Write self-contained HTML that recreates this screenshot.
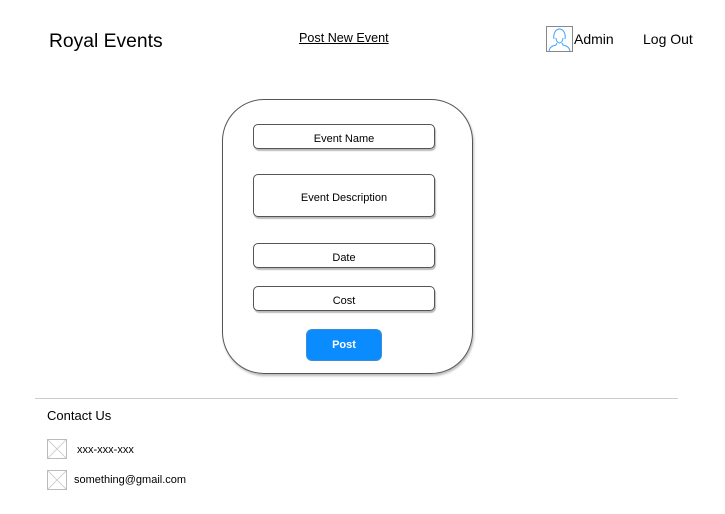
<!DOCTYPE html>
<html><head><meta charset="utf-8"><style>
*{margin:0;padding:0;box-sizing:border-box}
body{width:725px;height:514px;background:#fff;font-family:"Liberation Sans",Arial,sans-serif;color:#000;position:relative;overflow:hidden}
.a{position:absolute;white-space:nowrap}
.card{position:absolute;left:222px;top:99px;width:251px;height:275px;border:1px solid #555;border-radius:42px;box-shadow:1px 2px 2px #bbb}
.f{position:absolute;left:253px;width:182px;border:1px solid #555;border-radius:5px;box-shadow:1px 2px 1px #bbb;font-size:11px;display:flex;align-items:center;justify-content:center;background:#fff;padding-top:4px}
.btn{position:absolute;left:306px;top:329px;width:76px;height:32px;background:#0a8cff;border:1px solid #3a8fd8;border-radius:6px;color:#fff;font-weight:bold;font-size:11px;display:flex;align-items:center;justify-content:center}
.ph{position:absolute;left:47px;width:20px;height:20px;border:1px solid #bbb}
</style></head><body>
<div class="a" style="left:49px;top:31px;font-size:19.3px">Royal Events</div>
<div class="a" style="left:299px;top:31px;font-size:12.6px;text-decoration:underline">Post New Event</div>
<svg class="a" style="left:546px;top:26px" width="27" height="26" viewBox="0 0 27 26">
<rect x="0.5" y="0.5" width="26" height="25" fill="#fff" stroke="#888"/>
<path d="M8 13c-1-6 2-10 5.5-10S20 7 19 13M10 12c0 3 2 5 3.5 5s3.5-2 3.5-5M11 17l-1 2c-4 1-6 2-7 6M16 17l1 2c4 1 6 2 7 6" fill="none" stroke="#3aa0ff" stroke-width="1"/>
</svg>
<div class="a" style="left:574px;top:31px;font-size:14px">Admin</div>
<div class="a" style="left:643px;top:31px;font-size:14px">Log Out</div>
<div class="card"></div>
<div class="f" style="top:124px;height:25px">Event Name</div>
<div class="f" style="top:174px;height:43px">Event Description</div>
<div class="f" style="top:243px;height:25px">Date</div>
<div class="f" style="top:286px;height:25px">Cost</div>
<div class="btn">Post</div>
<div class="a" style="left:35px;top:398px;width:643px;height:1px;background:#ccc"></div>
<div class="a" style="left:47px;top:408px;font-size:13px">Contact Us</div>
<svg class="ph" style="top:439px" viewBox="0 0 20 20"><path d="M0 0L20 20M20 0L0 20" stroke="#ccc"/></svg>
<div class="a" style="left:77px;top:444px;font-size:11px">xxx-xxx-xxx</div>
<svg class="ph" style="top:470px" viewBox="0 0 20 20"><path d="M0 0L20 20M20 0L0 20" stroke="#ccc"/></svg>
<div class="a" style="left:74px;top:474px;font-size:11px">something@gmail.com</div>
</body></html>
